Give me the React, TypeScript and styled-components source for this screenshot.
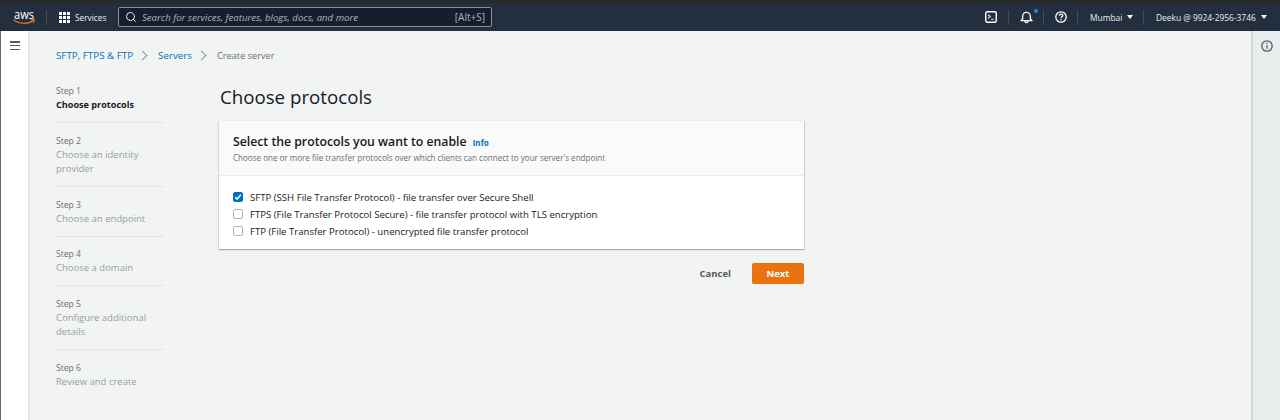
import React from "react";
import styled, { createGlobalStyle } from "styled-components";
import { FiSearch } from "react-icons/fi";

const GlobalStyle = createGlobalStyle`
  html, body {
    margin: 0;
    padding: 0;
    height: 420px;
    overflow: hidden;
    background: #f2f3f3;
    font-family: "Open Sans", "Noto Sans", sans-serif;
  }
`;

const steps = [
  { label: "Step 1", name: ["Choose protocols"] },
  { label: "Step 2", name: ["Choose an identity", "provider"] },
  { label: "Step 3", name: ["Choose an endpoint"] },
  { label: "Step 4", name: ["Choose a domain"] },
  { label: "Step 5", name: ["Configure additional", "details"] },
  { label: "Step 6", name: ["Review and create"] },
];

const protocols = [
  { text: "SFTP (SSH File Transfer Protocol) - file transfer over Secure Shell", checked: true },
  { text: "FTPS (File Transfer Protocol Secure) - file transfer protocol with TLS encryption", checked: false },
  { text: "FTP (File Transfer Protocol) - unencrypted file transfer protocol", checked: false },
];

function AwsLogo() {
  return (
    <svg width="24" height="27" viewBox="0 -5 24 27" fill="none">
      <text x="1" y="9.5" fontFamily="Open Sans, sans-serif" fontSize="12.5" fontWeight="500" textLength="20" lengthAdjust="spacingAndGlyphs" fill="#fff">aws</text>
      <path d="M0.8 11.3c6 4 14.2 4 19.2.6" stroke="#ec7211" strokeWidth="1.3" strokeLinecap="round" />
      <path d="M18.4 10.9l3-.4-.8 2.9" stroke="#ec7211" strokeWidth="1.1" strokeLinecap="round" strokeLinejoin="round" />
    </svg>
  );
}

function Grid() {
  const cells = [0, 4, 8];
  return (
    <svg width="11" height="11" viewBox="0 0 11 11" fill="#fff">
      {cells.map((y) => cells.map((x) => <rect key={`${x}-${y}`} x={x} y={y} width="3" height="3" />))}
    </svg>
  );
}

function TerminalIcon() {
  return (
    <svg width="12" height="12" viewBox="0 0 12 12" fill="none" stroke="#fff">
      <rect x="0.75" y="0.75" width="10.5" height="10.5" rx="1.5" strokeWidth="1.4" />
      <path d="M3.2 3.6l2 1.9-2 1.9M6.2 8.2h2.4" strokeWidth="1.1" />
    </svg>
  );
}

function BellIcon() {
  return (
    <svg width="13" height="13" viewBox="0 0 13 13" fill="none" stroke="#fff" strokeWidth="1.3">
      <path d="M1 9.7h11l-1.7-1.9V5.2a3.8 3.8 0 0 0-7.6 0v2.6z" strokeLinejoin="round" />
      <path d="M4.9 10c0 2.1 3.2 2.1 3.2 0" />
    </svg>
  );
}

function HelpIcon() {
  return (
    <svg width="12" height="12" viewBox="0 0 12 12" fill="none" stroke="#fff" strokeWidth="1.3">
      <circle cx="6" cy="6" r="5.2" />
      <path d="M4.3 4.7c0-2.2 3.5-2.2 3.5-.1 0 1.2-1.8 1.3-1.8 2.6" />
      <path d="M6 8.1v1.2" />
    </svg>
  );
}

function InfoIcon() {
  return (
    <svg width="12" height="12" viewBox="0 0 12 12" fill="none" stroke="#545b64" strokeWidth="1.3">
      <circle cx="6" cy="6" r="5.2" />
      <path d="M6 5.2v3.6M6 2.8v1.2" />
    </svg>
  );
}

export default function App() {
  return (
    <>
      <GlobalStyle />
      <Page>
        <TopStrip />
        <NavBar>
          <LogoSlot>
            <AwsLogo />
          </LogoSlot>
          <NavDivider />
          <ServicesButton>
            <Grid />
            <span>Services</span>
          </ServicesButton>
          <SearchBox>
            <FiSearch size={12} color="#eaeded" />
            <SearchText>Search for services, features, blogs, docs, and more</SearchText>
            <Shortcut>[Alt+S]</Shortcut>
          </SearchBox>
          <NavRight>
            <NavIcon $width={34}>
              <TerminalIcon />
            </NavIcon>
            <NavDivider />
            <NavIcon $width={34}>
              <BellIcon />
              <Dot />
            </NavIcon>
            <NavDivider />
            <NavIcon $width={33}>
              <HelpIcon />
            </NavIcon>
            <NavDivider />
            <NavMenu $width={65}>
              Mumbai <Caret />
            </NavMenu>
            <NavDivider />
            <NavMenu $width={136}>
              Deeku @ 9924-2956-3746 <Caret />
            </NavMenu>
          </NavRight>
        </NavBar>
        <Body>
          <LeftRail>
            <Burger>
              <span />
              <span />
              <span />
            </Burger>
          </LeftRail>
          <Main>
            <Breadcrumbs>
              <Crumb>SFTP, FTPS &amp; FTP</Crumb>
              <Chevron />
              <Crumb>Servers</Crumb>
              <Chevron />
              <CurrentCrumb>Create server</CurrentCrumb>
            </Breadcrumbs>
            <Wizard>
              <StepList>
                {steps.map((s, i) => (
                  <Step key={s.label} $last={i === steps.length - 1}>
                    <StepLabel>{s.label}</StepLabel>
                    <StepName $active={i === 0}>
                      {s.name.map((l) => (
                        <div key={l}>{l}</div>
                      ))}
                    </StepName>
                  </Step>
                ))}
              </StepList>
              <Content>
                <Title>Choose protocols</Title>
                <Card>
                  <CardHeader>
                    <CardTitle>
                      Select the protocols you want to enable <InfoLink>Info</InfoLink>
                    </CardTitle>
                    <CardHint>
                      Choose one or more file transfer protocols over which clients can connect to your server's endpoint
                    </CardHint>
                  </CardHeader>
                  <CardBody>
                    {protocols.map((p) => (
                      <Option key={p.text}>
                        <Box $checked={p.checked}>
                          {p.checked && (
                            <svg width="10" height="10" viewBox="0 0 10 10" fill="none" stroke="#fff" strokeWidth="1.8">
                              <path d="M1.5 5.2l2.4 2.4 4.6-5.4" />
                            </svg>
                          )}
                        </Box>
                        {p.text}
                      </Option>
                    ))}
                  </CardBody>
                </Card>
                <Actions>
                  <CancelButton>Cancel</CancelButton>
                  <NextButton>Next</NextButton>
                </Actions>
              </Content>
            </Wizard>
          </Main>
          <RightRail>
            <InfoIcon />
          </RightRail>
        </Body>
      </Page>
    </>
  );
}

const Page = styled.div`
  width: 1280px;
  height: 420px;
  display: flex;
  flex-direction: column;
  overflow: hidden;
`;

const TopStrip = styled.div`
  height: 3px;
  background: #2a2a2a;
`;

const NavBar = styled.header`
  height: 28px;
  background: #232f3e;
  display: flex;
  align-items: center;
  padding-left: 13px;
  color: #eaeded;
`;

const LogoSlot = styled.div`
  width: 33px;
  height: 17px;
  margin-top: 1px;
  display: flex;
  align-items: center;
`;

const NavDivider = styled.div`
  width: 1px;
  height: 15px;
  background: #414d5c;
`;

const ServicesButton = styled.div`
  display: flex;
  align-items: center;
  gap: 5px;
  margin-left: 12px;
  width: 60px;
  font-size: 8.3px;
  font-weight: 500;
`;

const SearchBox = styled.div`
  width: 374px;
  height: 20px;
  box-sizing: border-box;
  margin-left: -1px;
  padding: 0 6px 0 6px;
  background: #161e2d;
  border: 1px solid #879596;
  border-radius: 2px;
  display: flex;
  align-items: center;
`;

const SearchText = styled.span`
  margin-left: 5px;
  font-size: 9.6px;
  font-style: italic;
  color: #aab7b8;
  flex: 1;
`;

const Shortcut = styled.span`
  font-size: 10px;
  color: #aab7b8;
`;

const NavRight = styled.div`
  margin-left: auto;
  display: flex;
  align-items: center;
`;

const NavIcon = styled.div<{ $width: number }>`
  position: relative;
  width: ${(p) => p.$width}px;
  height: 16px;
  display: flex;
  align-items: center;
  justify-content: center;
`;

const Dot = styled.span`
  position: absolute;
  top: 0;
  right: 5px;
  width: 4px;
  height: 4px;
  border-radius: 50%;
  background: #00a1c9;
`;

const NavMenu = styled.div<{ $width: number }>`
  width: ${(p) => p.$width}px;
  box-sizing: border-box;
  padding-left: 12px;
  display: flex;
  align-items: center;
  gap: 5px;
  font-size: 8.4px;
  font-weight: 500;
  white-space: nowrap;
`;

const Caret = styled.span`
  width: 0;
  height: 0;
  border-left: 3px solid transparent;
  border-right: 3px solid transparent;
  border-top: 4px solid #fff;
`;

const Body = styled.div`
  flex: 1;
  display: flex;
  min-height: 0;
`;

const LeftRail = styled.aside`
  width: 27px;
  flex-shrink: 0;
  background: #fff;
  border-left: 1px solid #6a6a6a;
  border-right: 2px solid #e3e6e6;
  display: flex;
  justify-content: center;
  padding-top: 10px;
`;

const Burger = styled.div`
  width: 10px;
  height: 9px;
  display: flex;
  flex-direction: column;
  justify-content: space-between;
  span {
    height: 1.5px;
    background: #545b64;
  }
`;

const Main = styled.main`
  flex: 1;
  padding: 17px 0 0 26px;
  min-width: 0;
`;

const Breadcrumbs = styled.nav`
  display: flex;
  align-items: center;
  height: 14px;
`;

const Crumb = styled.span`
  font-size: 9.8px;
  color: #0073bb;
  font-weight: 500;
`;

const CurrentCrumb = styled.span`
  font-size: 9.2px;
  color: #687078;
`;

const Chevron = styled.span`
  width: 6px;
  height: 6px;
  margin: 0 12px 0 6px;
  border-top: 1px solid #879596;
  border-right: 1px solid #879596;
  transform: rotate(45deg);
`;

const Wizard = styled.div`
  display: flex;
  margin-top: 22px;
`;

const StepList = styled.ol`
  list-style: none;
  margin: 0;
  padding: 0;
  width: 108px;
  flex-shrink: 0;
`;

const Step = styled.li<{ $last: boolean }>`
  padding-bottom: 10px;
  margin-bottom: 10.75px;
  border-bottom: ${(p) => (p.$last ? "none" : "1px solid #e1e4e4")};
`;

const StepLabel = styled.div`
  font-size: 8.6px;
  line-height: 14px;
  color: #687078;
`;

const StepName = styled.div<{ $active: boolean }>`
  font-size: ${(p) => (p.$active ? "9.1px" : "9.5px")};
  line-height: 14px;
  color: ${(p) => (p.$active ? "#16191f" : "#95a1a2")};
  font-weight: ${(p) => (p.$active ? 700 : 400)};
`;

const Content = styled.div`
  margin-left: 55px;
  width: 585px;
`;

const Title = styled.h1`
  margin: 1px 0 0;
  padding-left: 1px;
  height: 36px;
  font-size: 18.7px;
  font-weight: 400;
  line-height: 24px;
  color: #16191f;
`;

const Card = styled.section`
  background: #fff;
  box-shadow: 0 1px 1px 0 rgba(0, 28, 36, 0.3), 1px 0 1px 0 rgba(0, 28, 36, 0.1), -1px 0 1px 0 rgba(0, 28, 36, 0.08);
`;

const CardHeader = styled.div`
  height: 55px;
  box-sizing: border-box;
  padding: 12px 14px 0;
  background: #fafafa;
  border-bottom: 1px solid #eaeded;
`;

const CardTitle = styled.div`
  font-size: 12.25px;
  line-height: 17px;
  font-weight: 600;
  color: #16191f;
`;

const InfoLink = styled.span`
  margin-left: 3px;
  font-size: 8px;
  font-weight: 700;
  color: #0073bb;
`;

const CardHint = styled.div`
  font-size: 8.05px;
  line-height: 13px;
  color: #687078;
`;

const CardBody = styled.div`
  padding: 14px 14px 11px;
  display: flex;
  flex-direction: column;
  gap: 3px;
`;

const Option = styled.label`
  display: flex;
  align-items: center;
  gap: 7px;
  height: 14px;
  font-size: 9.6px;
  color: #16191f;
`;

const Box = styled.span<{ $checked: boolean }>`
  width: 10px;
  height: 10px;
  border-radius: 2px;
  display: flex;
  align-items: center;
  justify-content: center;
  box-sizing: border-box;
  background: ${(p) => (p.$checked ? "#0073bb" : "#fff")};
  border: 1px solid ${(p) => (p.$checked ? "#0073bb" : "#aab7b8")};
`;

const Actions = styled.div`
  display: flex;
  justify-content: flex-end;
  align-items: center;
  margin-top: 14px;
`;

const CancelButton = styled.button`
  border: none;
  background: none;
  padding: 0;
  margin-right: 21px;
  font: 700 9.5px "Open Sans", sans-serif;
  color: #545b64;
`;

const NextButton = styled.button`
  width: 52px;
  height: 21px;
  border: none;
  border-radius: 2px;
  background: #ec7211;
  color: #fff;
  font: 700 9.5px "Open Sans", sans-serif;
`;

const RightRail = styled.aside`
  width: 27px;
  flex-shrink: 0;
  background: #eaeded;
  border-left: 2px solid #d5dbdb;
  display: flex;
  justify-content: center;
  padding-top: 9px;
`;
